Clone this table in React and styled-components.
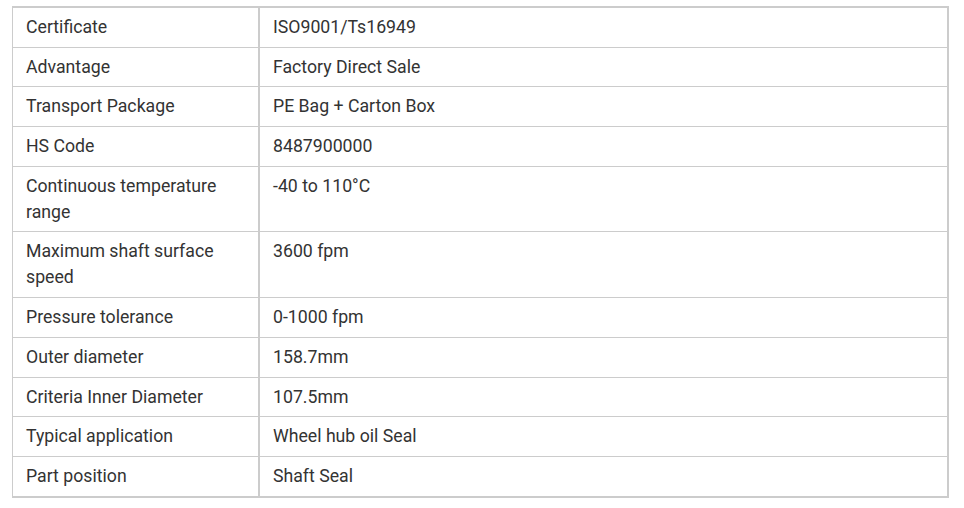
import React from 'react';
import styled, { createGlobalStyle } from 'styled-components';

// --- Styles --- //

const GlobalStyle = createGlobalStyle`
  body {
    margin: 0;
    background-color: #ffffff;
    font-family: Roboto, "Liberation Sans", Arial, sans-serif;
  }
`

const Wrapper = styled.div`
  padding: 6px 15px 0 12px;
`

const SpecTable = styled.table`
  border-collapse: collapse;
  border: 2px solid #cccccc;
  border-left-width: 1px;
  color: #333333;
  font-size: 17.7px;
  line-height: 26px;
  table-layout: fixed;
  width: 937px;
`

const Cell = styled.td`
  border: 1px solid #cccccc;
  padding: 6px 13px 6.7px 13px;
  vertical-align: top;
  width: ${props => props.$label ? '219px' : 'auto'};
  border-right-width: ${props => props.$label ? '2px' : '1px'};
`

// --- Data --- //

const specs = [
  ['Certificate', 'ISO9001/Ts16949'],
  ['Advantage', 'Factory Direct Sale'],
  ['Transport Package', 'PE Bag + Carton Box'],
  ['HS Code', '8487900000'],
  ['Continuous temperature range', '-40 to 110°C'],
  ['Maximum shaft surface speed', '3600 fpm'],
  ['Pressure tolerance', '0-1000 fpm'],
  ['Outer diameter', '158.7mm'],
  ['Criteria Inner Diameter', '107.5mm'],
  ['Typical application', 'Wheel hub oil Seal'],
  ['Part position', 'Shaft Seal'],
];

// --- Component --- //

const App = () => {
  return (
    <Wrapper>
      <GlobalStyle />
      <SpecTable>
        <tbody>
          {specs.map(([label, value]) => (
            <tr key={label}>
              <Cell $label>{label}</Cell>
              <Cell>{value}</Cell>
            </tr>
          ))}
        </tbody>
      </SpecTable>
    </Wrapper>
  )
}

export default App;
